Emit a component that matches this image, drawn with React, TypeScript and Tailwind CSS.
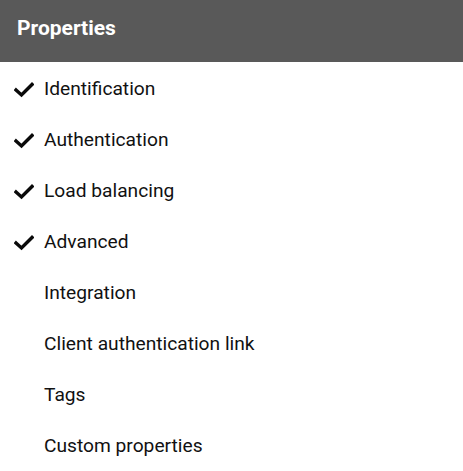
const items = [
  { label: "Identification", done: true },
  { label: "Authentication", done: true },
  { label: "Load balancing", done: true },
  { label: "Advanced", done: true },
  { label: "Integration", done: false },
  { label: "Client authentication link", done: false },
  { label: "Tags", done: false },
  { label: "Custom properties", done: false },
];

function Check() {
  return (
    <svg width="20" height="16" viewBox="0 0 20 16" className="text-[#0a0a0a]">
      <path d="M2 8 L7.5 13 L18 2.5" fill="none" stroke="currentColor" strokeWidth="3.4" strokeLinecap="square" />
    </svg>
  );
}

export default function App() {
  return (
    <div className="w-[463px] h-[471px] bg-white font-['Roboto',sans-serif]">
      {/* Header */}
      <div className="h-[62px] bg-[#595959] flex items-center px-[17px] pb-[5px]">
        <span className="text-white text-[21px] font-bold">Properties</span>
      </div>

      {/* Sections */}
      <div className="pt-[2px]">
        {items.map((item) => (
          <div key={item.label} className="h-[51px] flex items-center text-[19.2px] text-[#111]">
            <span className="w-[44px] flex justify-center pl-[4px]">{item.done && <Check />}</span>
            <span>{item.label}</span>
          </div>
        ))}
      </div>
    </div>
  );
}
